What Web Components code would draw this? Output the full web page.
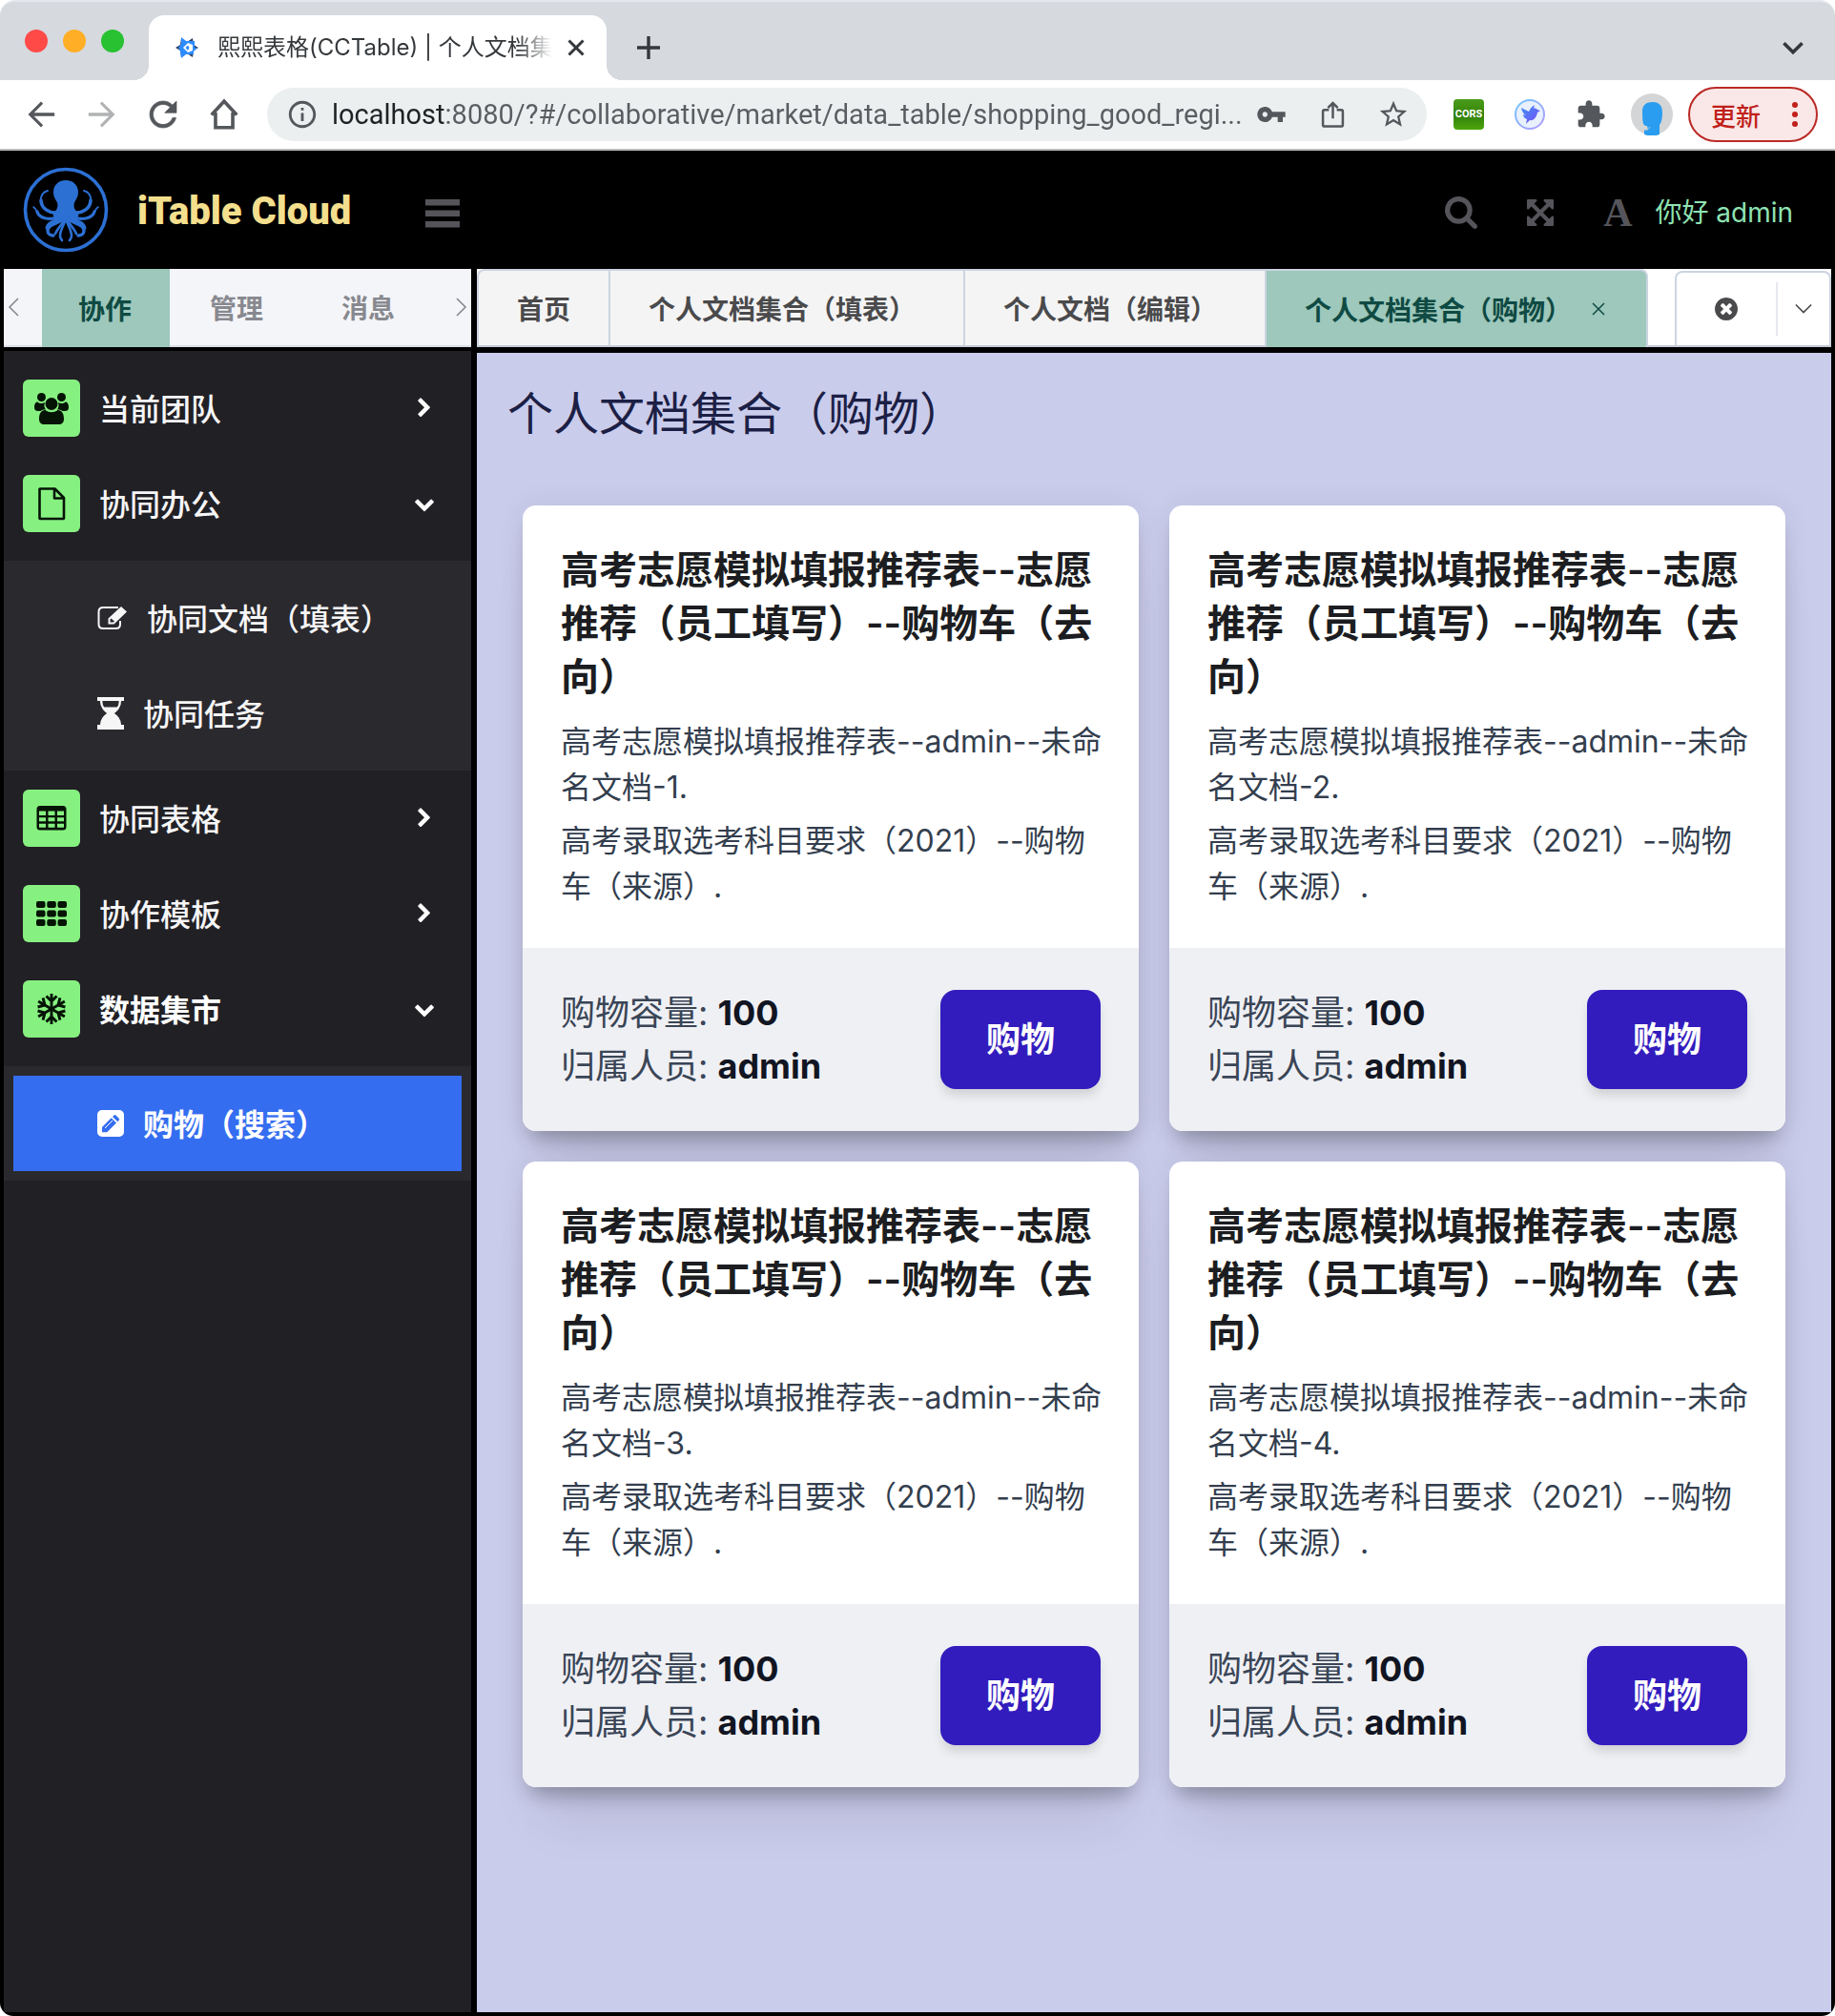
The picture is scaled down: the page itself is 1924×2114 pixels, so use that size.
<!DOCTYPE html>
<html lang="zh-CN">
<head>
<meta charset="utf-8">
<title>熙熙表格(CCTable) | 个人文档集合（购物）</title>
<style>
  html { background: #fff; }
  body { margin: 0; font-family: Inter, "Noto Sans CJK SC", sans-serif; }
</style>
</head>
<body>
<app-window></app-window>

<script>
const ICONS = {
  back: ['0 0 24 24', '<path d="M20.5 10.9H7.6l5.7-5.7L12 3.9 3.9 12l8.100 8.100 1.300-1.300-5.700-5.700h12.900z"/>'],
  forward: ['0 0 24 24', '<path d="M3.500 10.900h12.900l-5.700-5.700L12 3.900l8.100 8.100-8.100 8.100-1.300-1.300 5.700-5.700H3.500z"/>'],
  reload: ['0 0 24 24', '<path d="M17.650 6.350C16.200 4.900 14.210 4 12 4c-4.420 0-7.990 3.580-7.990 8s3.570 8 7.990 8c3.730 0 6.840-2.550 7.730-6h-2.080c-.82 2.330-3.040 4-5.650 4-3.310 0-6-2.690-6-6s2.690-6 6-6c1.660 0 3.140.69 4.220 1.780L13 11h7V4l-2.350 2.350z" stroke="currentColor" stroke-width=".4"/>'],
  home: ['0 0 32 32', '<path d="M3.500 16.500L16 3l12.500 13.500M7.500 14v15h17V14" fill="none" stroke="currentColor" stroke-width="3.400"/>'],
  info: ['0 0 24 24', '<path d="M11 7h2v2h-2zm0 4h2v6h-2zm1-9C6.480 2 2 6.480 2 12s4.480 10 10 10 10-4.480 10-10S17.520 2 12 2zm0 18c-4.410 0-8-3.590-8-8s3.590-8 8-8 8 3.590 8 8-3.590 8-8 8z"/>'],
  key: ['0 0 24 24', '<path d="M12.650 10C11.830 7.670 9.610 6 7 6c-3.310 0-6 2.690-6 6s2.690 6 6 6c2.610 0 4.830-1.670 5.650-4H17v4h4v-4h2v-4H12.650zM7 14c-1.100 0-2-.9-2-2s.9-2 2-2 2 .9 2 2-.9 2-2 2z"/>'],
  share: ['0 0 24 28', '<g fill="none" stroke="currentColor" stroke-width="2.400"><path d="M8 9.500H3.500Q2 9.500 2 11v13.500Q2 26 3.500 26h17q1.500 0 1.500-1.500V11q0-1.500-1.500-1.500H16"/><path d="M12 18V3M7 7.500l5-5 5 5"/></g>'],
  star: ['0 0 24 24', '<path d="M22 9.240l-7.190-.62L12 2 9.190 8.630 2 9.240l5.460 4.730L5.820 21 12 17.270 18.180 21l-1.630-7.030L22 9.240zM12 15.400l-3.760 2.270 1-4.280-3.320-2.880 4.380-.38L12 6.100l1.710 4.040 4.380.38-3.320 2.880 1 4.280L12 15.400z"/>'],
  puzzle: ['0 0 24 24', '<path d="M20.500 11H19V7c0-1.100-.9-2-2-2h-4V3.500C13 2.120 11.880 1 10.500 1S8 2.120 8 3.500V5H4c-1.100 0-1.990.9-1.990 2v3.800H3.500c1.490 0 2.700 1.210 2.700 2.700s-1.210 2.700-2.700 2.700H2V20c0 1.100.9 2 2 2h3.800v-1.500c0-1.490 1.210-2.700 2.700-2.700 1.490 0 2.700 1.210 2.700 2.700V22H17c1.100 0 2-.9 2-2v-4h1.500c1.380 0 2.500-1.120 2.500-2.500S21.880 11 20.500 11z"/>'],
  bird: ['0 0 32 32', '<defs><linearGradient id="ring" x1="0" y1="0" x2="1" y2="1"><stop offset="0" stop-color="#6fc4fb"/><stop offset="1" stop-color="#b59cff"/></linearGradient><linearGradient id="wing" x1="0" y1="0" x2="1" y2="1"><stop offset="0" stop-color="#3f8ff7"/><stop offset="1" stop-color="#7a4df5"/></linearGradient></defs><circle cx="16" cy="16" r="15" fill="#e9f0fe" stroke="url(#ring)" stroke-width="2"/><path fill="url(#wing)" d="M7 9l8 4c1-3 3-5 6-7l-1 4c2-1 3 0 4 1l3 1-3 2c-1 5-4 9-8 8l-4 4 1-5c-3-1-4-3-4-5l3 1c-3-2-4-4-5-8z"/>'],
  avatar: ['0 0 44 44', '<circle cx="22" cy="22" r="22" fill="#d4d5d6"/><path fill="#2a9df0" d="M12 19c0-7 4-10 11-10s10 4 10 11c0 5-1 11-3 13v10c-5 2-11 2-16 0v-5h4l-1-4c-4 0-5-2-5-15z"/><path d="M14 38c3 1 4 0 6-3" stroke="#a9cbe6" fill="none"/>'],
  favicon: ['0 0 24 24', '<path fill="#2b4160" d="M6 2l6 4 6-4 1 7 5 3-5 3-1 7-6-4-6 4-1-7-5-3 5-3z"/><path fill="#2d8cff" d="M6 1l5 4h9v7l3 0-4 4 0 3h-8l-5 4-1-7-2-4 3-4z"/><path fill="#fff" d="M13 7l5 2v6l-5 2-5-5z"/><path fill="#2d8cff" d="M13 9.500l1.500 2.500-1.500 3-2.500-3z"/>'],
  close: ['0 0 16 16', '<path d="M2 2l12 12M14 2L2 14" fill="none" stroke="currentColor" stroke-width="2.400"/>'],
  thinclose: ['0 0 16 16', '<path d="M2 2l12 12M14 2L2 14" fill="none" stroke="currentColor" stroke-width="1.500"/>'],
  plus: ['0 0 24 24', '<path d="M12 0v24M0 12h24" fill="none" stroke="currentColor" stroke-width="3.400"/>'],
  down: ['0 0 20 20', '<path d="M2 6l8 8 8-8" fill="none" stroke="currentColor" stroke-width="3"/>'],
  thindown: ['0 0 20 20', '<path d="M1 5l9 9 9-9" fill="none" stroke="currentColor" stroke-width="1.800"/>'],
  thinleft: ['0 0 20 20', '<path d="M15 1l-9 9 9 9" fill="none" stroke="currentColor" stroke-width="1.600"/>'],
  thinright: ['0 0 20 20', '<path d="M5 1l9 9-9 9" fill="none" stroke="currentColor" stroke-width="1.600"/>'],
  dots: ['0 0 8 36', '<circle cx="4" cy="8" r="3"/><circle cx="4" cy="18" r="3"/><circle cx="4" cy="28" r="3"/>'],
  bars: ['0 0 36 30', '<path d="M0 0h36v6.500H0zM0 11.500h36v6.500H0zM0 23h36v6.500H0z"/>'],
  search: ['64 128 1664 1664', '<path d="M1216 832q0-185-131.500-316.500t-316.500-131.500-316.500 131.500-131.500 316.500 131.500 316.500 316.500 131.500 316.500-131.500 131.500-316.500zm512 832q0 52-38 90t-90 38q-54 0-90-38l-343-342q-179 124-399 124-143 0-273.500-55.500t-225-150-150-225-55.500-273.500 55.500-273.500 150-225 225-150 273.500-55.500 273.500 55.500 225 150 150 225 55.500 273.500q0 220-124 399l343 343q37 37 37 90z"/>'],
  expand: ['128 128 1536 1536', '<path d="M1411 541l-355 355 355 355 144-144q29-31 70-14 39 17 39 59v448q0 26-19 45t-45 19h-448q-42 0-59-40-17-39 14-69l144-144-355-355-355 355 144 144q31 30 14 69-17 40-59 40h-448q-26 0-45-19t-19-45v-448q0-42 40-59 39-17 69 14l144 144 355-355-355-355-144 144q-19 19-45 19-12 0-24-5-40-17-40-59v-448q0-26 19-45t45-19h448q42 0 59 40 17 39-14 69l-144 144 355 355 355-355-144-144q-31-30-14-69 17-40 59-40h448q26 0 45 19t19 45v448q0 42-39 59-13 5-25 5-26 0-45-19z"/>'],
  right: ['0 0 1792 1792', '<path d="M1363 877l-742 742q-19 19-45 19t-45-19l-166-166q-19-19-19-45t19-45l531-531-531-531q-19-19-19-45t19-45l166-166q19-19 45-19t45 19l742 742q19 19 19 45t-19 45z"/>'],
  open: ['0 0 1792 1792', '<path d="M1683 808l-742 741q-19 19-45 19t-45-19l-742-741q-19-19-19-45.500t19-45.500l166-165q19-19 45-19t45 19l531 531 531-531q19-19 45-19t45 19l166 165q19 19 19 45.500t-19 45.500z"/>'],
  clear: ['128 128 1536 1536', '<path d="M1277 1122q0-26-19-45l-181-181 181-181q19-19 19-45 0-27-19-46l-90-90q-19-19-46-19-26 0-45 19l-181 181-181-181q-19-19-45-19-27 0-46 19l-90 90q-19 19-19 46 0 26 19 45l181 181-181 181q-19 19-19 45 0 27 19 46l90 90q19 19 46 19 26 0 45-19l181-181 181 181q19 19 45 19 27 0 46-19l90-90q19-19 19-46zm387-226q0 209-103 385.500t-279.500 279.500-385.500 103-385.500-103-279.500-279.500-103-385.500 103-385.500 279.500-279.500 385.500-103 385.500 103 279.500 279.500 103 385.500z"/>'],
  users: ['0 0 36 36', '<circle cx="7.500" cy="6.500" r="4.500"/><circle cx="28.500" cy="6.500" r="4.500"/><path d="M3.500 11.500c2 2 5 2 7.500.5-1 3-.5 5.500 1 7.500-2.500 0-4 0-5.500 1.500H4c-3 0-4-1.500-4-4 0-3 1-5.500 3.500-5.500zM32.500 11.500c-2 2-5 2-7.500.5 1 3 .5 5.500-1 7.500 2.500 0 4 0 5.500 1.500H32c3 0 4-1.500 4-4 0-3-1-5.500-3.500-5.500z"/><circle cx="18" cy="13.500" r="6.500"/><path d="M11.500 20c4 3 9 3 13 0 5 0 6.500 4.500 6.500 9.500 0 3.500-2 5.500-5.500 5.500h-15C7 35 5 33 5 29.500c0-5 1.500-9.500 6.500-9.500z"/>'],
  file: ['0 0 36 36', '<path d="M6 2.500h15.500L31 12v21.500q0 .5-.5.5h-24.500q-.5 0-.5-.5V3q0-.5.5-.5zM21 3v9.500h10" fill="none" stroke="currentColor" stroke-width="2.600" stroke-linejoin="round"/>'],
  table: ['0 0 36 36', '<path fill-rule="evenodd" d="M6 5h24a3.500 3.500 0 0 1 3.500 3.500v18.500a3.500 3.500 0 0 1-3.500 3.500H6A3.500 3.500 0 0 1 2.500 27V8.500A3.500 3.500 0 0 1 6 5zM5 10.500v4.500h7v-4.500zM14.500 10.500v4.500h7v-4.500zM24 10.500v4.500h7v-4.500zM5 17.300v4h7v-4zM14.500 17.300v4h7v-4zM24 17.300v4h7v-4zM5 23.700v4h7v-4zM14.500 23.700v4h7v-4zM24 23.700v4h7v-4z"/>'],
  grid: ['0 0 36 36', '<g><rect x="2" y="5" width="9.500" height="7" rx="2"/><rect x="13.300" y="5" width="9.500" height="7" rx="2"/><rect x="24.500" y="5" width="9.500" height="7" rx="2"/><rect x="2" y="14.500" width="9.500" height="7" rx="2"/><rect x="13.300" y="14.500" width="9.500" height="7" rx="2"/><rect x="24.500" y="14.500" width="9.500" height="7" rx="2"/><rect x="2" y="24" width="9.500" height="7" rx="2"/><rect x="13.300" y="24" width="9.500" height="7" rx="2"/><rect x="24.500" y="24" width="9.500" height="7" rx="2"/></g>'],
  snow: ['0 0 36 36', '<defs><path id="arm" d="M18 18V2M12.500 4.500L18 10l5.500-5.500" fill="none" stroke="currentColor" stroke-width="2.900"/></defs>' + [0, 60, 120, 180, 240, 300].map(a => `<use href="#arm" transform="rotate(${a} 18 18)"/>`).join('')],
  edit: ['0 0 32 28', '<path d="M22 3H6Q1.500 3 1.500 7.500v13Q1.500 25 6 25h13.500q4.500 0 4.500-4.500V17" fill="none" stroke="currentColor" stroke-width="2"/><path fill-rule="evenodd" d="M11.500 20.500v-6L25 2l6 5.500L17.500 20.500zM13.500 15.500v3h3.500l1-1-3.500-3z"/>'],
  hourglass: ['0 0 28 34', '<path d="M0 0h28v4H0zM0 29h28v5H0z"/><path d="M4 3c0 8 4 11 8 14-4 3-8 6-8 13M24 3c0 8-4 11-8 14 4 3 8 6 8 13" fill="none" stroke="currentColor" stroke-width="2.400"/><path d="M6 10.500h16c-2 4-5 5.500-6 7h-4c-1-1.500-4-3-6-7zM12 17h4c3 2 7 5 7.500 12h-19C5 22 9 19 12 17z"/>'],
  pencil: ['0 0 28 28', '<path fill-rule="evenodd" d="M5 0h18a5 5 0 0 1 5 5v18a5 5 0 0 1-5 5H5a5 5 0 0 1-5-5V5a5 5 0 0 1 5-5zM5 18v5.200h5.200L20 13.500 14.700 8.200zM16 6.900l5.300 5.300 1.400-1.500q1-1 0-2l-3.200-3.200q-1-1-2 0z"/><path d="M8 19l8-8" stroke="currentColor" stroke-width="1"/>'],
  octopus: ['0 0 90 90', '<circle cx="45" cy="45" r="42.500" fill="none" stroke="currentColor" stroke-width="3.600"/><path d="M45 14c8 0 13 5.500 13 12.500 0 5-2.500 8-4 11-1.500 4 .5 8.500 4.500 11.500L57 57H33l-1.500-8c4-3 6-7.500 4.500-11.500-1.500-3-4-6-4-11C32 19.500 37 14 45 14z"/>'
    + '<defs><g id="arms" fill="none" stroke="currentColor" stroke-linecap="round"><path stroke-width="3.600" d="M37 48c-10 1-18-5-18-13"/><path stroke-width="2" d="M19 36c-1-5 2-10 7-11"/><path stroke-width="3.200" d="M38 53c-11 3-21 1-23-6"/><path stroke-width="1.600" d="M15 48c-1-3-2-5-4-6"/><path stroke-width="3" d="M39 55c-8 2-13 4-14 9"/><path stroke-width="3.400" d="M42 55c-6 5-16 5-16 12 0 3 3 5 6 5"/><path stroke-width="2.600" d="M43 56c-3 6-7 9-9 14"/><path stroke-width="2.600" d="M44 57c-2 6-5 10-5 15 0 2 1 4 2 5"/></g></defs><use href="#arms"/><use href="#arms" transform="translate(90 0) scale(-1 1)"/>'],
};

function define(name, css, html, setup) {
  const tpl = document.createElement('template');
  tpl.innerHTML = `<style>*{box-sizing:border-box}button{display:flex;align-items:center;font:inherit;color:inherit;background:none;border:0;margin:0;padding:0;cursor:pointer}a{color:inherit;text-decoration:none}${css}</style>${html}`;
  customElements.define(name, class extends HTMLElement {
    constructor() {
      super();
      this.attachShadow({ mode: 'open' }).append(tpl.content.cloneNode(true));
    }
    connectedCallback() { if (setup) setup(this, this.shadowRoot); }
  });
}

define('ui-icon', ':host{display:inline-flex;flex:none}svg{display:block;fill:currentColor}', '<svg aria-hidden="true"></svg>', (el, root) => {
  const [box, shapes] = ICONS[el.getAttribute('name')];
  const w = el.getAttribute('w'), svg = root.querySelector('svg');
  svg.setAttribute('viewBox', box);
  svg.setAttribute('width', w);
  svg.setAttribute('height', el.getAttribute('h') || w);
  svg.innerHTML = shapes;
});

define('browser-tabs', `
  :host{display:flex;align-items:flex-end;height:84px;background:#d6d9de;border-top:2px solid #e4e8ee;border-radius:16px 16px 0 0;padding:0 32px 0 26px;color:#35383b}
  .lights{display:flex;gap:16px;align-self:center;margin-right:26px}
  .lights i{width:24px;height:24px;border-radius:50%}
  .tab{position:relative;display:flex;align-items:center;width:480px;height:68px;background:#fff;border-radius:16px 16px 0 0;padding:0 22px 0 28px}
  .tab::before,.tab::after{content:"";position:absolute;bottom:0;width:16px;height:16px}
  .tab::before{left:-16px;background:radial-gradient(circle at 0 0,transparent 16px,#fff 16px)}
  .tab::after{right:-16px;background:radial-gradient(circle at 100% 0,transparent 16px,#fff 16px)}
  .name{flex:1;margin:0 8px 0 20px;font-size:24px;line-height:36px;white-space:nowrap;-webkit-mask:linear-gradient(90deg,#000 88%,transparent 98%);mask:linear-gradient(90deg,#000 88%,transparent 98%)}
  .new{margin:0 auto 22px 32px}
  .list{margin-bottom:22px}
`, `
  <div class="lights"><i style="background:#ff4a48"></i><i style="background:#ffae26"></i><i style="background:#28c131"></i></div>
  <div class="tab"><ui-icon name="favicon" w="24"></ui-icon><span class="name">熙熙表格(CCTable) | 个人文档集</span><button aria-label="关闭标签页"><ui-icon name="close" w="20"></ui-icon></button></div>
  <button class="new" aria-label="新标签页"><ui-icon name="plus" w="24"></ui-icon></button>
  <button class="list" aria-label="搜索标签页"><ui-icon name="down" w="24"></ui-icon></button>
`);

define('browser-toolbar', `
  :host{display:flex;align-items:center;height:74px;background:#fff;border-bottom:2px solid #bcbcbc;padding:0 18px 0 22px;color:#54575b}
  .nav{display:flex;gap:22px;margin-right:24px}
  .nav button{width:42px;justify-content:center}
  .off{opacity:.45}
  .box{flex:1;min-width:0;display:flex;align-items:center;height:56px;border-radius:28px;background:#ebeff0;padding:0 18px 0 20px;gap:14px}
  input{flex:1;min-width:0;border:0;outline:0;padding:0;height:40px;font-family:Roboto,"Noto Sans",sans-serif;font-size:29px;color:transparent;background:linear-gradient(90deg,#202124 118px,#595d61 118px);-webkit-background-clip:text;background-clip:text}
  .acts{display:flex;gap:30px;align-items:center}
  .acts button{width:34px;justify-content:center}
  .ext{display:flex;align-items:center;gap:32px;margin:0 16px 0 28px}
  .ext button{justify-content:center;width:32px}
  .ext .cors{height:32px;border-radius:4px;background:linear-gradient(#4a9a1c,#3f8f0f 30%,#2f7d0a 50%,#4da60c);color:#fff;font:bold 11px/32px Roboto,sans-serif}
  .ext .face{width:44px;margin-left:-6px}
  .update{justify-content:space-between;width:136px;height:58px;border:2px solid #bb2a26;border-radius:29px;background:#f9e8e7;color:#c0201b;font-size:26px;font-weight:500;padding:0 18px 0 22px}
`, `
  <div class="nav">
    <button aria-label="后退"><ui-icon name="back" w="40"></ui-icon></button>
    <button class="off" aria-label="前进"><ui-icon name="forward" w="40"></ui-icon></button>
    <button aria-label="刷新"><ui-icon name="reload" w="42"></ui-icon></button>
    <button aria-label="主页"><ui-icon name="home" w="34"></ui-icon></button>
  </div>
  <div class="box">
    <ui-icon name="info" w="34"></ui-icon>
    <input aria-label="地址栏" value="localhost:8080/?#/collaborative/market/data_table/shopping_good_regi...">
    <div class="acts">
      <button aria-label="密码"><ui-icon name="key" w="32"></ui-icon></button>
      <button aria-label="分享"><ui-icon name="share" w="25" h="30"></ui-icon></button>
      <button aria-label="收藏"><ui-icon name="star" w="34"></ui-icon></button>
    </div>
  </div>
  <div class="ext">
    <button class="cors">CORS</button>
    <button aria-label="扩展"><ui-icon name="bird" w="32"></ui-icon></button>
    <button aria-label="扩展程序"><ui-icon name="puzzle" w="32"></ui-icon></button>
    <button class="face" aria-label="个人资料"><ui-icon name="avatar" w="44"></ui-icon></button>
  </div>
  <button class="update">更新<ui-icon name="dots" w="8" h="36"></ui-icon></button>
`);

define('app-header', `
  :host{display:flex;align-items:center;height:124px;padding:0 44px 0 24px;color:#55545a}
  .logo{color:#2c70d4;margin-right:30px}
  h1{margin:0;padding-top:4px;font:900 40px/60px Roboto,sans-serif;color:#f3df8d}
  .fold{margin:8px auto 0 78px}
  .tools{display:flex;align-items:center;gap:52px;padding-top:6px}
  .font{font:bold 42px/48px "Liberation Serif",serif;width:30px;justify-content:center}
  .user{font-size:28px;line-height:40px;color:#8fe3b3;margin-left:-28px}
`, `
  <ui-icon class="logo" name="octopus" w="90"></ui-icon>
  <h1>iTable Cloud</h1>
  <button class="fold" aria-label="折叠菜单"><ui-icon name="bars" w="36" h="30"></ui-icon></button>
  <div class="tools">
    <button aria-label="搜索"><ui-icon name="search" w="34"></ui-icon></button>
    <button aria-label="全屏"><ui-icon name="expand" w="28"></ui-icon></button>
    <button class="font">A</button>
    <a class="user" href="#user">你好 admin</a>
  </div>
`);

define('side-tabs', `
  :host{display:flex;align-items:center;height:82px;background:#f4f5f9;border-bottom:2px solid #dcdfe8;color:#88898f}
  .arrow{width:40px}
  .end{margin-left:auto;width:28px;justify-content:flex-end}
  nav{display:flex}
  nav a{display:flex;align-items:center;height:80px;padding:0 40px 0 38px;border-right:4px solid transparent;background-clip:padding-box;font-size:28px;font-weight:600}
  nav a.on{background-color:#9dc8bb;color:#0f4a43;height:82px;margin-bottom:-2px}
`, `
  <button class="arrow" aria-label="向左"><ui-icon name="thinleft" w="20"></ui-icon></button>
  <nav><a class="on" href="#work">协作</a><a href="#manage">管理</a><a href="#message">消息</a></nav>
  <button class="arrow end" aria-label="向右"><ui-icon name="thinright" w="20"></ui-icon></button>
`);

define('menu-item', `
  :host{display:block}
  button{width:100%;height:100px;padding:0 38px 0 20px;color:#f6f6f7;font-size:32px;font-weight:500;text-align:left}
  .tile{display:flex;align-items:center;justify-content:center;width:60px;height:60px;border-radius:6px;background:#86f180;color:#051405;margin-right:20px}
  .name{flex:1;padding-bottom:2px}
  :host([current]) .name{font-weight:700;color:#fff}
  .arrow{display:flex;color:#fff}
  .sub{display:none}
  :host([expanded]) .sub{display:block;margin-top:10px;padding:10px;background:#2a292e}
`, `
  <button><span class="tile"></span><span class="name"></span><span class="arrow"></span></button>
  <div class="sub"><slot></slot></div>
`, (el, root) => {
  root.querySelector('.tile').innerHTML = `<ui-icon name="${el.getAttribute('icon')}" w="36"></ui-icon>`;
  root.querySelector('.name').textContent = el.getAttribute('label');
  const open = el.hasAttribute('expanded');
  root.querySelector('button').setAttribute('aria-expanded', open);
  root.querySelector('.arrow').innerHTML = `<ui-icon name="${open ? 'open' : 'right'}" w="22"></ui-icon>`;
});

define('menu-link', `
  :host{display:block}
  a{display:flex;align-items:center;gap:20px;height:100px;padding-left:88px;color:#f6f6f7;font-size:32px;font-weight:500}
  :host([current]) a{background:#356df0;color:#fff;font-weight:700}
  .name{padding-bottom:2px}
`, '<a href="#"><span class="ic"></span><span class="name"><slot></slot></span></a>', (el, root) => {
  root.querySelector('.ic').outerHTML = `<ui-icon name="${el.getAttribute('icon')}" w="${el.getAttribute('w')}" h="${el.getAttribute('h')}"></ui-icon>`;
});

define('side-panel', `
  :host{display:flex;flex-direction:column;gap:4px}
  nav{flex:1;background:#212025;padding-top:10px}
`, `
  <side-tabs></side-tabs>
  <nav>
    <menu-item icon="users" label="当前团队"></menu-item>
    <menu-item icon="file" label="协同办公" expanded>
      <menu-link icon="edit" w="32" h="28">协同文档（填表）</menu-link>
      <menu-link icon="hourglass" w="28" h="34">协同任务</menu-link>
    </menu-item>
    <menu-item icon="table" label="协同表格"></menu-item>
    <menu-item icon="grid" label="协作模板"></menu-item>
    <menu-item icon="snow" label="数据集市" expanded current>
      <menu-link icon="pencil" w="28" h="28" current>购物（搜索）</menu-link>
    </menu-item>
  </nav>
`);

define('page-tabs', `
  :host{display:flex;height:82px;background:#fff;border-bottom:2px solid #c5cad8;color:#4a4a4c;font-size:28px;font-weight:600}
  nav{display:flex;margin-right:auto}
  nav div{display:flex;align-items:center;background:#f4f4f4;border-top:2px solid #ccd4e2;border-right:2px solid #ccd4e2;padding:0 50px 0 40px;white-space:nowrap}
  nav .home{border-left:2px solid #ccd4e2;border-radius:8px 0 0 0;padding:0 40px}
  nav .on{background:#9dc8bb;color:#0f4a43;border-radius:0 8px 0 0;padding-right:42px;margin-bottom:-2px}
  .x{margin-left:20px}
  .ops{display:flex;align-items:center;width:164px;margin-top:2px;border:2px solid #ccd4e2;border-bottom:0;border-radius:8px 8px 0 0}
  .ops .clear{flex:1;justify-content:center;height:56px;border-right:2px solid #e6e8ee}
  .ops .more{width:54px;justify-content:center}
`, `
  <nav>
    <div class="home"><a href="#home">首页</a></div>
    <div><a href="#fill">个人文档集合（填表）</a></div>
    <div><a href="#edit">个人文档（编辑）</a></div>
    <div class="on"><a href="#buy">个人文档集合（购物）</a><button class="x" aria-label="关闭"><ui-icon name="thinclose" w="16"></ui-icon></button></div>
  </nav>
  <div class="ops"><button class="clear" aria-label="关闭全部"><ui-icon name="clear" w="24"></ui-icon></button><button class="more" aria-label="更多"><ui-icon name="thindown" w="18"></ui-icon></button></div>
`);

define('goods-card', `
  :host{display:flex;flex-direction:column;border-radius:14px;background:#fff;box-shadow:0 50px 50px -20px rgba(0,0,0,.1),0 16px 20px -8px rgba(0,0,0,.24),0 0 30px rgba(0,0,0,.07)}
  .body{flex:1;padding:40px 38px 40px 40px}
  h3{margin:0 0 16px;font-size:40px;line-height:56px;font-weight:600;color:#1c1d21}
  p{margin:0 0 8px;font-size:32px;line-height:48px;color:#333e4e}
  p:last-child{margin:0}
  footer{display:flex;align-items:center;justify-content:space-between;padding:40px;background:#eff0f4;border-radius:0 0 14px 14px;font-size:36px;line-height:56px;color:#3a4556}
  b{font-weight:700;color:#111522}
  button{height:104px;padding:0 48px;border-radius:16px;background:#321cbd;color:#fff;font-size:36px;font-weight:600;box-shadow:0 8px 12px -2px rgba(0,0,0,.14)}
`, `
  <div class="body">
    <h3>高考志愿模拟填报推荐表--志愿推荐（员工填写）--购物车（去向）</h3>
    <p class="doc"></p>
    <p>高考录取选考科目要求（2021）--购物车（来源）.</p>
  </div>
  <footer>
    <div><div>购物容量: <b>100</b></div><div>归属人员: <b>admin</b></div></div>
    <button>购物</button>
  </footer>
`, (el, root) => {
  root.querySelector('.doc').textContent = `高考志愿模拟填报推荐表--admin--未命名文档-${el.getAttribute('number')}.`;
});

define('goods-page', `
  :host{display:block;background:#caccec;padding:32px 48px}
  h2{margin:0 -16px 64px;font-size:48px;line-height:64px;font-weight:400;color:#1c1f45}
  .grid{display:grid;grid-template-columns:1fr 1fr;gap:32px}
`, `
  <h2>个人文档集合（购物）</h2>
  <div class="grid"><goods-card number="1"></goods-card><goods-card number="2"></goods-card><goods-card number="3"></goods-card><goods-card number="4"></goods-card></div>
`);

define('app-window', `
  :host{display:flex;flex-direction:column;min-height:100vh}
  .app{flex:1;display:flex;flex-direction:column;background:#000;border-radius:0 0 14px 14px}
  .main{flex:1;display:flex;gap:6px;padding:0 4px 4px}
  side-panel{flex:none;width:490px}
  .work{flex:1;min-width:0;display:flex;flex-direction:column;gap:6px}
  goods-page{flex:1}
`, `
  <browser-tabs></browser-tabs>
  <browser-toolbar></browser-toolbar>
  <div class="app">
    <app-header></app-header>
    <div class="main">
      <side-panel></side-panel>
      <div class="work"><page-tabs></page-tabs><goods-page></goods-page></div>
    </div>
  </div>
`);
</script>
</body>
</html>
